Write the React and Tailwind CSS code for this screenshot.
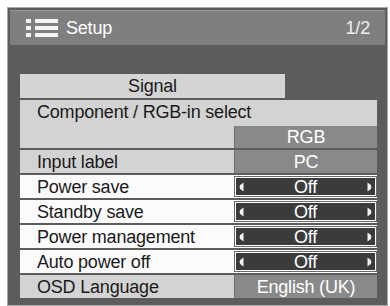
const font = { fontFamily: '"Liberation Sans", Arial, sans-serif' }

function Arrow({ dir }) {
  return (
    <svg width="5" height="10" viewBox="0 0 5 10" className="shrink-0">
      {dir === 'left'
        ? <path d="M4.5 0.5 L4.5 9.5 L1.2 7 Q0 5 1.2 3 Z" fill="#f2f2f2" />
        : <path d="M0.5 0.5 L0.5 9.5 L3.8 7 Q5 5 3.8 3 Z" fill="#f2f2f2" />}
    </svg>
  )
}

function Row({ label, bg, children }) {
  return (
    <div className={`flex h-[23px] ${bg}`}>
      <div className="flex-1 pl-[17px] flex items-center text-[18px] tracking-[-0.2px] leading-none text-[#1a1a1a]">{label}</div>
      <div className="w-[143px] flex">{children}</div>
    </div>
  )
}

function OffBox() {
  return (
    <div className="flex-1 my-[1px] border border-[#6a6a6a] bg-white p-[1px] flex">
      <div className="flex-1 bg-[#3c3b3b] flex items-center justify-between px-[3px]">
        <Arrow dir="left" />
        <span className="text-[18px] tracking-[-0.2px] leading-none text-white">Off</span>
        <Arrow dir="right" />
      </div>
    </div>
  )
}

function GrayCell({ text }) {
  return (
    <div className="flex-1 bg-[#8a8989] border-l border-[#6f6f6f] flex items-center justify-center text-[18px] tracking-[-0.2px] leading-none text-white">
      {text}
    </div>
  )
}

export default function App() {
  return (
    <div className="w-[390px] h-[306px] bg-white overflow-hidden" style={font}>
      <div className="ml-[7px] mt-[7px] w-[381px] h-[299px] border border-[#a9a9a9] bg-[#5d5b5c] p-[2px]">
        {/* Header */}
        <div className="h-[35px] bg-[#807f7f] border-t border-[#969696] flex items-center pl-[16px] pr-[15px]">
          <svg width="32" height="18" viewBox="0 0 32 18">
            <rect x="0" y="0" width="5" height="4" fill="#f4f4f4" />
            <rect x="9" y="0" width="23" height="4" fill="#f4f4f4" />
            <rect x="0" y="7" width="5" height="4" fill="#f4f4f4" />
            <rect x="9" y="7" width="23" height="4" fill="#f4f4f4" />
            <rect x="0" y="14" width="5" height="4" fill="#f4f4f4" />
            <rect x="9" y="14" width="23" height="4" fill="#f4f4f4" />
          </svg>
          <span className="ml-[8px] text-[18px] tracking-[-0.2px] leading-none text-white">Setup</span>
          <span className="ml-auto text-[18px] tracking-[-0.2px] leading-none text-[#f0f0f0]">1/2</span>
        </div>

        {/* Body */}
        <div className="pt-[29px] pl-[10px] pr-[8px] flex flex-col gap-[2px]">
          <div className="w-[265px] h-[24px] bg-[#d4d4d4] flex items-center justify-center text-[18px] tracking-[-0.2px] leading-none text-[#1a1a1a]">
            Signal
          </div>
          <div className="bg-[#d3d3d3]">
            <div className="h-[24px] pl-[17px] flex items-center text-[18px] tracking-[-0.2px] leading-none text-[#1a1a1a]">
              Component / RGB-in select
            </div>
            <div className="h-[24px] flex">
              <div className="flex-1" />
              <div className="w-[143px] flex pt-[2px]">
                <GrayCell text="RGB" />
              </div>
            </div>
          </div>
          <Row label="Input label" bg="bg-[#d3d3d3]">
            <GrayCell text="PC" />
          </Row>
          <Row label="Power save" bg="bg-[#fbfbfb]"><OffBox /></Row>
          <Row label="Standby save" bg="bg-[#fbfbfb]"><OffBox /></Row>
          <Row label="Power management" bg="bg-[#fbfbfb]"><OffBox /></Row>
          <Row label="Auto power off" bg="bg-[#fbfbfb]"><OffBox /></Row>
          <Row label="OSD Language" bg="bg-[#d3d3d3]">
            <GrayCell text="English (UK)" />
          </Row>
        </div>
      </div>
    </div>
  )
}
